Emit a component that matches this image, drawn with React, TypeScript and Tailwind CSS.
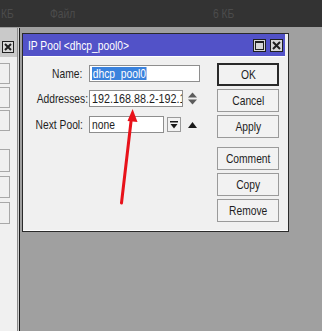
import React from "react";

function N({ children, o = "center", className = "" }: { children: React.ReactNode; o?: "left" | "right" | "center"; className?: string }) {
  const origin = o === "left" ? "origin-left" : o === "right" ? "origin-right" : "origin-center";
  return <span className={`inline-block whitespace-nowrap scale-x-[0.79] ${origin} ${className}`}>{children}</span>;
}

function TitleBtn({ kind }: { kind: "max" | "close" }) {
  return (
    <div className="w-[13px] h-[13px] border border-[#1f1f1f] bg-[#d6d6d6] flex items-center justify-center">
      {kind === "max" ? (
        <svg width="9" height="9" viewBox="0 0 9 9">
          <rect x="0.5" y="0.5" width="8" height="8" fill="none" stroke="#1f1f1f" strokeWidth="1" />
          <rect x="0" y="0" width="9" height="2" fill="#1f1f1f" />
        </svg>
      ) : (
        <svg width="9" height="9" viewBox="0 0 9 9">
          <path d="M1 1 L8 8 M8 1 L1 8" stroke="#1f1f1f" strokeWidth="2" />
        </svg>
      )}
    </div>
  );
}

function Btn({ label, def, className = "" }: { label: string; def?: boolean; className?: string }) {
  return (
    <div
      className={`w-[62px] h-[23px] flex items-center justify-center text-[13px] text-[#1e1e1e] bg-[#f2f2f2] ${
        def ? "border-2 border-[#2a2a2a]" : "border border-[#9a9a9a]"
      } ${className}`}
    >
      <N>{label}</N>
    </div>
  );
}

export default function App() {
  return (
    <div className="relative w-[322px] h-[331px] overflow-hidden bg-[#a0a0a0] flex flex-col font-['Liberation_Sans',Arial,sans-serif]">
      {/* top dark bar */}
      <div className="h-[27px] shrink-0 bg-[#333333] flex items-center text-[13px] text-[#4c4c4c]">
        <span className="w-[50px] pl-[1px]"><N o="left">КБ</N></span>
        <span className="w-[163px]"><N o="left">Файл</N></span>
        <span><N o="left">6 КБ</N></span>
      </div>

      <div className="flex flex-1 min-h-0">
        {/* left window fragment */}
        <div className="mt-[1px] flex shrink-0">
          <div className="w-[17px] flex flex-col">
            <div className="h-[29px] bg-[#c9c9c9] pt-[13px] pl-[2px]">
              <div className="w-[12px] h-[12px] border border-[#1f1f1f] bg-[#d9d9d9] flex items-center justify-center">
                <svg width="8" height="8" viewBox="0 0 8 8">
                  <path d="M1 1 L7 7 M7 1 L1 7" stroke="#1f1f1f" strokeWidth="2" />
                </svg>
              </div>
            </div>
            <div className="flex-1 bg-[#f0f0f0] flex flex-col pt-[6px]">
              <div className="w-[10px] h-[21px] border border-l-0 border-[#a8a8a8]" />
              <div className="w-[10px] h-[21px] mt-[3px] border border-l-0 border-[#a8a8a8]" />
              <div className="w-[10px] h-[21px] mt-[2px] border border-l-0 border-[#a8a8a8]" />
              <div className="w-[10px] h-[23px] mt-[18px] border border-l-0 border-[#a8a8a8]" />
              <div className="w-[10px] h-[22px] mt-[4px] border border-l-0 border-[#a8a8a8]" />
              <div className="w-[10px] h-[22px] mt-[4px] border border-l-0 border-[#a8a8a8]" />
            </div>
          </div>
          <div className="w-[1px] bg-[#8a8a8a]" />
          <div className="w-[1px] bg-[#d2d2d2]" />
          <div className="w-[1px] bg-[#1c1c1c]" />
        </div>

        {/* dialog */}
        <div className="ml-[2px] mt-[6px] w-[267px] h-[199px] shrink-0 border border-[#2a2a2a] bg-[#f0f0f0] flex flex-col">
          <div className="w-[262px] h-[22px] shrink-0 bg-[#5252c8] flex items-center pl-[5px] pr-[2px]">
            <span className="text-[13px] text-white flex-1 leading-none">
              <N o="left">IP Pool &lt;dhcp_pool0&gt;</N>
            </span>
            <div className="flex gap-[4px]">
              <TitleBtn kind="max" />
              <TitleBtn kind="close" />
            </div>
          </div>
          <div className="h-[1px] bg-white w-[262px]" />

          <div className="flex flex-1">
            {/* form */}
            <div className="w-[194px] pt-[8px] flex flex-col text-[13px] text-[#1e1e1e]">
              <div className="flex items-center h-[17px]">
                <span className="w-[59px] text-right"><N o="right">Name:</N></span>
                <div className="ml-[7px] w-[111px] h-[17px] border border-[#8e8e8e] bg-white flex items-center pl-[2px]">
                  <N o="left" className="bg-[#3a82dd] text-white leading-[13px] h-[13px] px-[1px]">dhcp_pool0</N>
                </div>
              </div>
              <div className="flex items-center h-[17px] mt-[8px]">
                <span className="w-[59px] text-right"><N o="right">Addresses:</N></span>
                <div className="ml-[7px] w-[94px] h-[17px] border border-[#8e8e8e] bg-white flex items-center pl-[2px] overflow-hidden">
                  <span className="inline-block whitespace-nowrap scale-x-[0.83] origin-left">192.168.88.2-192.168.88.254</span>
                </div>
                <svg className="ml-[5px]" width="9" height="13" viewBox="0 0 9 13">
                  <path d="M4.5 0.5 L9 5.5 L0 5.5 Z" fill="#5c5c5c" />
                  <path d="M0 7.5 L9 7.5 L4.5 12.5 Z" fill="#5c5c5c" />
                </svg>
              </div>
              <div className="flex items-center h-[17px] mt-[9px]">
                <span className="w-[59px] text-right"><N o="right">Next Pool:</N></span>
                <div className="ml-[7px] w-[75px] h-[17px] border border-[#8e8e8e] bg-white flex items-center pl-[2px]">
                  <N o="left">none</N>
                </div>
                <div className="ml-[3px] w-[14px] h-[15px] border border-[#9a9a9a] bg-[#f2f2f2] flex items-center justify-center">
                  <svg width="8" height="8" viewBox="0 0 8 8">
                    <rect x="0" y="0" width="8" height="1.5" fill="#1a1a1a" />
                    <path d="M0.5 3 L7.5 3 L4 7.5 Z" fill="#1a1a1a" />
                  </svg>
                </div>
                <svg className="ml-[7px]" width="9" height="6" viewBox="0 0 9 6">
                  <path d="M4.5 0 L9 6 L0 6 Z" fill="#1a1a1a" />
                </svg>
              </div>
            </div>

            {/* buttons */}
            <div className="pt-[6px] flex flex-col">
              <Btn label="OK" def />
              <Btn label="Cancel" className="mt-[3px]" />
              <Btn label="Apply" className="mt-[3px]" />
              <Btn label="Comment" className="mt-[9px]" />
              <Btn label="Copy" className="mt-[3px]" />
              <Btn label="Remove" className="mt-[3px]" />
            </div>
          </div>
          <div className="h-[1px] bg-white" />
        </div>
      </div>

      {/* red arrow annotation */}
      <svg className="absolute inset-0 pointer-events-none" width="322" height="331" viewBox="0 0 322 331">
        <line x1="121.5" y1="203" x2="131.3" y2="119" stroke="#e8121a" strokeWidth="3" strokeLinecap="round" />
        <path d="M132.6 109 L137.5 122 L127.5 121 Z" fill="#e8121a" />
      </svg>
    </div>
  );
}
